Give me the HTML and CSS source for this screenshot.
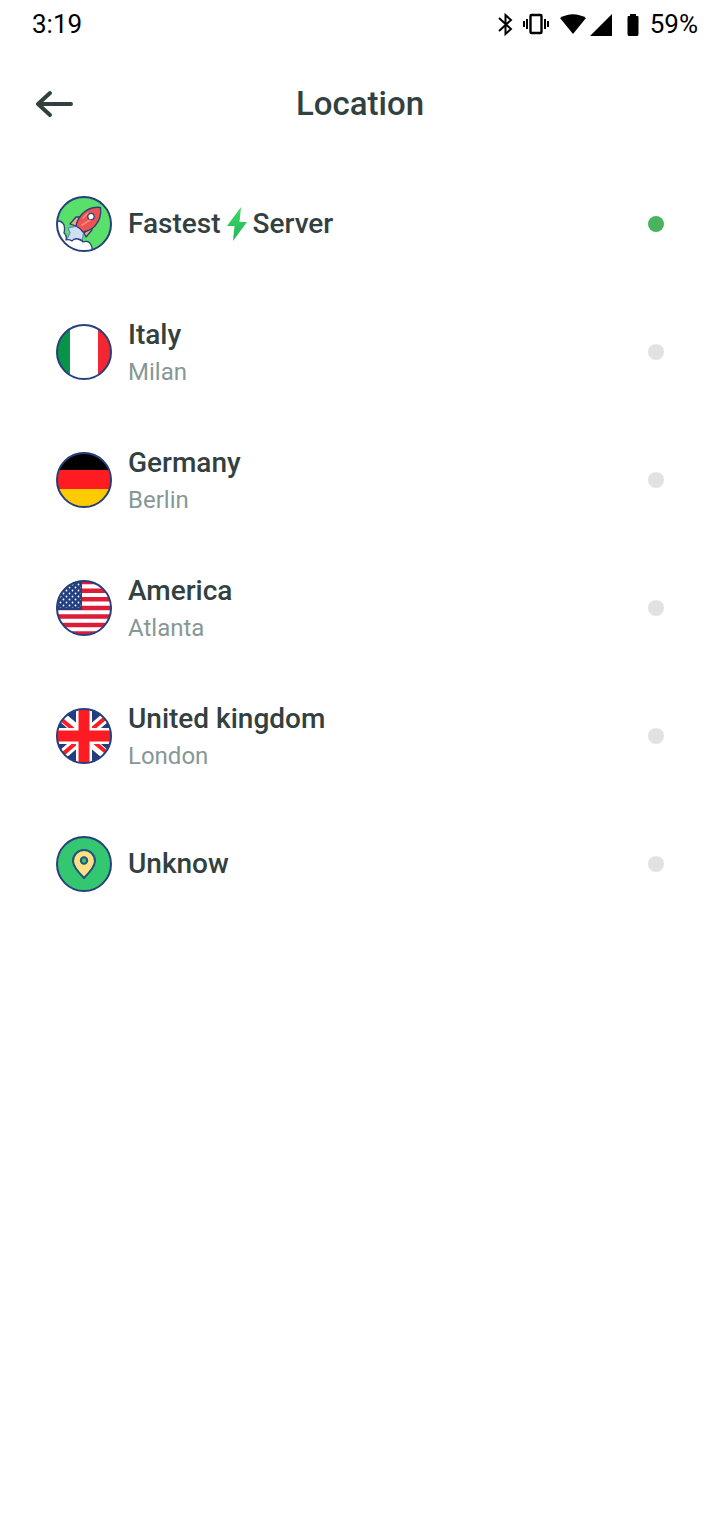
FILE: index.html
```html
<!DOCTYPE html>
<html lang="en">
<head>
    <meta charset="UTF-8">
    <meta name="viewport" content="width=device-width, initial-scale=1.0">
    <title>Location</title>
    <link rel="stylesheet" href="styles.css">
</head>
<body>
    <div class="status-bar">
        <span>3:19</span>
        <div class="status-icons">
            <svg width="16" height="24" viewBox="0 0 16 24" fill="none" stroke="#000" stroke-width="2">
                <path d="M2 6l12 11-5.500 5V3l5.500 5L2 19"/>
            </svg>
            <svg class="vibrate" width="28" height="24" viewBox="0 0 28 24" fill="none" stroke="#000" stroke-width="2">
                <rect x="8.500" y="3" width="11" height="18" rx="1" stroke-width="2.400"/>
                <path d="M5 7v10M2 9v6M23 7v10M26 9v6"/>
            </svg>
            <svg class="wifi" width="26" height="24" viewBox="0 0 26 24">
                <path d="M0 6Q13-1.500 26 6L13 22z"/>
            </svg>
            <svg class="signal" width="22" height="24" viewBox="0 0 22 24">
                <path d="M22 2v22H0z"/>
            </svg>
            <svg class="battery" width="12" height="24" viewBox="0 0 12 24">
                <path d="M3 2h6v2h1.500Q11.500 4 11.500 5v17Q11.500 24 10 24H2Q.5 24 .5 22V5Q.5 4 1.500 4H3z"/>
            </svg>
            <span>59%</span>
        </div>
    </div>

    <header class="header">
        <button type="button" class="back" aria-label="Back">
            <svg width="40" height="32" viewBox="0 0 40 32" fill="none" stroke="#324140" stroke-width="4" stroke-linecap="round" stroke-linejoin="round">
                <path d="M37 16H4M16 5L4 16l12 11"/>
            </svg>
        </button>
        <h1>Location</h1>
    </header>

    <main class="locations">
        <label class="location">
            <svg class="icon" viewBox="0 0 56 56">
                <defs>
                    <clipPath id="round"><circle cx="28" cy="28" r="27.500"/></clipPath>
                </defs>
                <g clip-path="url(#round)">
                    <path fill="#58e06a" d="M0 0h56v56H0z"/>
                    <g stroke="#27417c" stroke-width="1.300" stroke-linejoin="round">
                        <path fill="#cfe0f2" stroke="#6d8fc0" d="M20 30l-8 2 2 5-4 8 8 2 8-2 2-10z"/>
                        <path fill="#f2a878" d="M24 21h-4l-6 7 6 2zM28 37l2 4 6-7-1-3z"/>
                        <path fill="#ee5350" d="M44.500 11.500Q34 10 26 18q-5 6-6 12 4 2 7 6 7-1 12-6 7-8 5.500-18.500z"/>
                        <path fill="#fff" d="M-2 26Q5 23 8 29q1 4 0 8 3 2 2 7 3-1 6 1 2-3 6-2 4 1 5 3 6-2 8 3 2 3 1 8H-2z"/>
                        <circle fill="#fff" cx="35" cy="20.500" r="3.200"/>
                    </g>
                    <path d="M26 29l8-5M27 22l5-5" stroke="#ff8b7c" stroke-width="1.500" stroke-linecap="round"/>
                </g>
                <circle class="ring" cx="28" cy="28" r="27"/>
            </svg>
            <span class="name">
                Fastest
                <svg class="bolt" width="20" height="34" viewBox="0 0 20 34">
                    <linearGradient id="bolt-fill" x2="0" y2="1">
                        <stop stop-color="#3ddc62"/>
                        <stop offset="1" stop-color="#22b35e"/>
                    </linearGradient>
                    <path fill="url(#bolt-fill)" d="M14 0L0 19h7.500L6 34l14-19h-7.500z"/>
                </svg>
                Server
            </span>
            <input type="radio" name="location" checked>
        </label>

        <label class="location">
            <svg class="icon" viewBox="0 0 56 56">
                <g clip-path="url(#round)">
                    <path fill="#fff" d="M0 0h56v56H0z"/>
                    <path fill="#079447" d="M0 0h14v56H0z"/>
                    <path fill="#f32632" d="M42 0h14v56H42z"/>
                </g>
                <circle class="ring" cx="28" cy="28" r="27"/>
            </svg>
            <span class="place">
                <span class="name">Italy</span>
                <span class="city">Milan</span>
            </span>
            <input type="radio" name="location">
        </label>

        <label class="location">
            <svg class="icon" viewBox="0 0 56 56">
                <g clip-path="url(#round)">
                    <path fill="#000" d="M0 0h56v19H0z"/>
                    <path fill="#ff1b22" d="M0 18h56v20H0z"/>
                    <path fill="#fdcb00" d="M0 37h56v19H0z"/>
                </g>
                <circle class="ring" cx="28" cy="28" r="27"/>
            </svg>
            <span class="place">
                <span class="name">Germany</span>
                <span class="city">Berlin</span>
            </span>
            <input type="radio" name="location">
        </label>

        <label class="location">
            <svg class="icon" viewBox="0 0 56 56">
                <defs>
                    <pattern id="stars" width="6" height="6" patternUnits="userSpaceOnUse">
                        <circle cx="1.500" cy="1.500" r=".9" fill="#fff"/>
                        <circle cx="4.500" cy="4.500" r=".9" fill="#fff"/>
                    </pattern>
                </defs>
                <g clip-path="url(#round)">
                    <path fill="#fff" d="M0 0h56v56H0z"/>
                    <path stroke="#dd1c38" stroke-width="4.400" d="M0 2h56M0 10.700h56M0 19.300h56M0 28h56M0 36.500h56M0 45h56M0 53.500h56"/>
                    <path fill="#223f80" d="M0 0h26v30H0z"/>
                    <path fill="url(#stars)" d="M0 2h25v26H0z"/>
                </g>
                <circle class="ring" cx="28" cy="28" r="27"/>
            </svg>
            <span class="place">
                <span class="name">America</span>
                <span class="city">Atlanta</span>
            </span>
            <input type="radio" name="location">
        </label>

        <label class="location">
            <svg class="icon" viewBox="0 0 56 56">
                <g clip-path="url(#round)">
                    <path fill="#213f80" d="M0 0h56v56H0z"/>
                    <path stroke="#fff" stroke-width="10" d="M0 4l56 48M56 4L0 52"/>
                    <path stroke="#ff1b22" stroke-width="4" d="M0 7l24 20M32 29l24 20M56 4L28 28M28 28L0 52"/>
                    <path stroke="#fff" stroke-width="16" d="M28 0v56M0 28h56"/>
                    <path stroke="#ff1b22" stroke-width="11" d="M28 0v56M0 28h56"/>
                </g>
                <circle class="ring" cx="28" cy="28" r="27"/>
            </svg>
            <span class="place">
                <span class="name">United kingdom</span>
                <span class="city">London</span>
            </span>
            <input type="radio" name="location">
        </label>

        <label class="location">
            <svg class="icon" viewBox="0 0 56 56">
                <circle fill="#34c771" cx="28" cy="28" r="27"/>
                <g stroke="#23527c" stroke-width="2" stroke-linejoin="round">
                    <path fill="#ffe085" d="M28 42Q17 31 17 25a11 11 0 0 1 22 0Q39 31 28 42z"/>
                    <circle fill="#34c771" cx="28" cy="24.500" r="3.200"/>
                </g>
                <circle class="ring" cx="28" cy="28" r="27"/>
            </svg>
            <span class="name">Unknow</span>
            <input type="radio" name="location">
        </label>
    </main>
</body>
</html>
```
FILE: styles.css
```css
* {
    box-sizing: border-box;
}

body {
    margin: 0;
    background: white;
    color: #324140;
    font-family: Roboto, sans-serif;
}

.status-bar {
    display: flex;
    justify-content: space-between;
    padding: 8px 22px 8px 32px;
    color: black;
    font-size: 26px;
    line-height: 32px;
}

.status-icons {
    display: flex;
    align-items: center;
}

.vibrate {
    margin-left: 9px;
}

.wifi {
    margin-left: 10px;
}

.signal {
    margin-left: 4px;
}

.battery {
    margin: 0 11px 0 15px;
}

.header {
    display: grid;
    grid-template-columns: 48px 1fr 48px;
    align-items: center;
    height: 112px;
    padding: 0 34px;
}

.header h1 {
    margin: 0;
    font-size: 33px;
    font-weight: 500;
    line-height: 40px;
    text-align: center;
}

.back {
    display: flex;
    padding: 0;
    border: none;
    background: none;
    cursor: pointer;
}

.locations {
    padding: 0 56px;
}

.location {
    display: flex;
    align-items: center;
    gap: 16px;
    height: 128px;
    cursor: pointer;
}

.icon {
    width: 56px;
    height: 56px;
    flex-shrink: 0;
}

.ring {
    fill: none;
    stroke: #27417c;
    stroke-width: 2;
}

.place {
    display: flex;
    flex-direction: column;
}

.name {
    display: flex;
    align-items: center;
    gap: 6px;
    font-size: 28px;
    font-weight: 500;
    line-height: 40px;
}

.city {
    color: #869896;
    font-size: 24px;
    line-height: 34px;
}

.location input {
    appearance: none;
    width: 16px;
    height: 16px;
    margin: 0 0 0 auto;
    border-radius: 50%;
    background: #e2e2e2;
    cursor: pointer;
}

.location input:checked {
    background: #4ab35e;
}
```
